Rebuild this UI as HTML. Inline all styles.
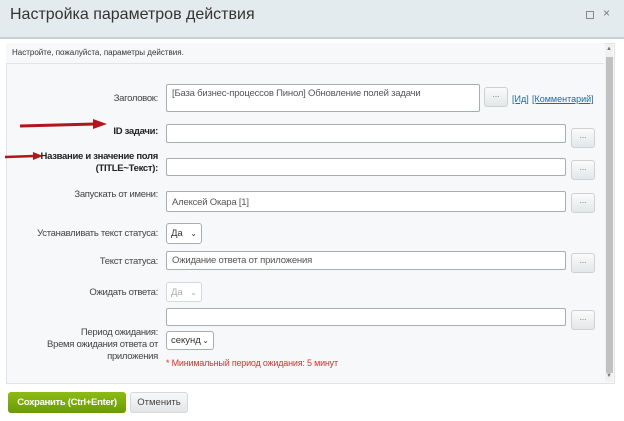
<!DOCTYPE html><html><head><meta charset="utf-8"><style>
body{margin:0;width:624px;height:421px;background:#fff;font-family:"Liberation Sans",sans-serif;position:relative;overflow:hidden;font-size:10px;color:#333}
.a{position:absolute}
.hd{left:0;top:0;width:624px;height:37px;background:#e4ebee;border-bottom:2px solid #c8cfd3}
.ta{position:absolute;background:#fff;border:1px solid #a8adb2;box-sizing:border-box;font-size:9.5px;letter-spacing:-0.2px;color:#555;padding:3px 5px;border-radius:2px;white-space:nowrap}
.bt{position:absolute;width:24px;height:20px;background:linear-gradient(#fafbfb,#e3e7e9);border:1px solid #cdd2d5;box-sizing:border-box;border-radius:3px;font-size:8px;text-align:center;line-height:14px;color:#666}
.lb{position:absolute;right:466px;text-align:right;font-size:9.5px;letter-spacing:-0.3px;color:#444;white-space:nowrap}
.sel{position:absolute;background:#fff;border:1px solid #a8adb2;box-sizing:border-box;border-radius:3px;font-size:9.5px;padding:0 4px;color:#333;white-space:nowrap;display:flex;align-items:center;justify-content:space-between}
</style></head><body>
<div class="a hd"></div>
<div class="a" style="left:10px;top:6px;font-size:16px;color:#333">Настройка параметров действия</div>
<div class="a" style="left:586px;top:11px;width:6px;height:6px;border:1px solid #888"></div>
<div class="a" style="left:603px;top:6px;font-size:12px;color:#777">×</div>
<div class="a" style="left:6px;top:43px;width:607px;height:339px;background:#f6f8f9;border:1px solid #e0e5e8"></div>
<div class="a" style="left:6px;top:43px;width:598px;height:20px;border-bottom:1px solid #e0e5e8;background:#f6f8f9"></div>
<div class="a" style="left:12px;top:48px;font-size:8px;color:#333">Настройте, пожалуйста, параметры действия.</div>
<div class="a" style="left:605px;top:44px;width:8px;height:338px;background:#f1f1f1"></div>
<div class="a" style="left:606px;top:57px;width:7px;height:316px;background:#c1c1c1"></div>
<div class="a" style="left:606px;top:46px;font-size:6px;color:#777">▲</div>
<div class="a" style="left:606px;top:373px;font-size:6px;color:#777">▼</div>

<div class="lb" style="top:93px">Заголовок:</div>
<div class="ta" style="left:166px;top:84px;width:314px;height:28px">[База бизнес-процессов Пинол] Обновление полей задачи</div>
<div class="bt" style="left:484px;top:87px">...</div>
<div class="a" style="left:512px;top:94px;color:#2067b0;text-decoration:underline;font-size:9px">[Ид]</div>
<div class="a" style="left:532px;top:94px;color:#2067b0;text-decoration:underline;font-size:9px">[Комментарий]</div>

<div class="lb" style="top:126px;font-weight:bold;color:#222">ID задачи:</div>
<div class="ta" style="left:166px;top:124px;width:400px;height:19px"></div>
<div class="bt" style="left:571px;top:128px">...</div>

<div class="lb" style="top:151px;font-weight:bold;color:#222;line-height:12px">Название и значение поля<br>(TITLE~Текст):</div>
<div class="ta" style="left:166px;top:158px;width:400px;height:18px"></div>
<div class="bt" style="left:571px;top:160px">...</div>

<div class="lb" style="top:189px">Запускать от имени:</div>
<div class="ta" style="left:166px;top:191px;width:400px;height:21px;padding-top:5px">Алексей Окара [1]</div>
<div class="bt" style="left:571px;top:193px">...</div>

<div class="lb" style="top:228px">Устанавливать текст статуса:</div>
<div class="sel" style="left:166px;top:223px;width:36px;height:21px"><span>Да</span><span style="font-size:8px">⌄</span></div>

<div class="lb" style="top:256px">Текст статуса:</div>
<div class="ta" style="left:166px;top:251px;width:400px;height:19px">Ожидание ответа от приложения</div>
<div class="bt" style="left:571px;top:253px">...</div>

<div class="lb" style="top:287px">Ожидать ответа:</div>
<div class="sel" style="left:166px;top:282px;width:36px;height:20px;color:#aaa;border-color:#d5d8da"><span>Да</span><span style="font-size:8px">⌄</span></div>

<div class="ta" style="left:166px;top:308px;width:400px;height:18px"></div>
<div class="bt" style="left:571px;top:310px">...</div>
<div class="lb" style="top:327px;line-height:12px">Период ожидания:<br>Время ожидания ответа от<br>приложения</div>
<div class="sel" style="left:166px;top:331px;width:48px;height:19px"><span>секунд</span><span style="font-size:8px">⌄</span></div>
<div class="a" style="left:166px;top:358px;color:#d33;font-size:9px;letter-spacing:-0.2px">* Минимальный период ожидания: 5 минут</div>

<div class="a" style="left:8px;top:392px;width:118px;height:21px;background:linear-gradient(#8dbb16,#6a9b05);border-radius:3px;color:#fff;font-weight:bold;font-size:9.5px;letter-spacing:-0.3px;text-align:center;line-height:21px">Сохранить (Ctrl+Enter)</div>
<div class="a" style="left:130px;top:392px;width:58px;height:21px;background:linear-gradient(#f8f9fa,#e2e6e8);border-radius:3px;border:1px solid #d5d9db;box-sizing:border-box;color:#444;font-size:9.5px;text-align:center;line-height:19px">Отменить</div>

<svg class="a" style="left:0;top:0" width="624" height="421">
<path d="M20 126 L95 124" stroke="#b0161c" stroke-width="3"/>
<path d="M93 119 L107 124 L93 129 Z" fill="#b0161c"/>
<path d="M5 157 L35 156" stroke="#b0161c" stroke-width="2.5"/>
<path d="M33 152 L43 156 L33 160 Z" fill="#b0161c"/>
</svg>
</body></html>
